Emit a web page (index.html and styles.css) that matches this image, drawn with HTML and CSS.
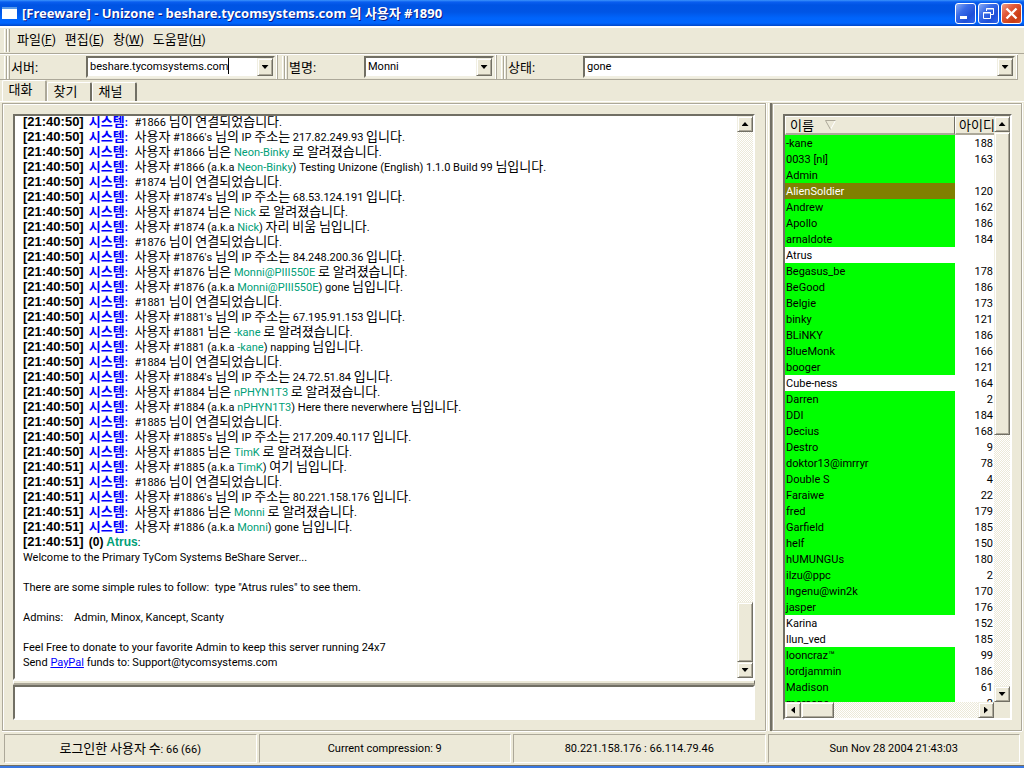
FILE: index.html
```html
<!DOCTYPE html>
<html lang="ko">
<head>
    <meta charset="UTF-8">
    <meta name="viewport" content="width=device-width, initial-scale=1.0">
    <title>[Freeware] - Unizone - beshare.tycomsystems.com 의 사용자 #1890</title>
    <link rel="stylesheet" href="styles.css">
</head>
<body>
    <div class="window">
        <header class="titlebar">
            <span class="app-icon"></span>
            <h1>[Freeware] - Unizone - beshare.tycomsystems.com 의 사용자 #1890</h1>
            <div class="window-buttons">
                <button type="button" aria-label="Minimize">
                    <svg viewBox="0 0 19 19"><path d="M4 12h7v3H4z" fill="#fff"/></svg>
                </button>
                <button type="button" aria-label="Restore">
                    <svg viewBox="0 0 19 19"><path d="M7.500 7V4.500h7v6H12M7 5h8M4.500 8.500h7v6h-7zM4 9h8" fill="none" stroke="#fff"/></svg>
                </button>
                <button type="button" class="close" aria-label="Close">
                    <svg viewBox="0 0 19 19"><path d="M4.500 4.500l10 10M14.500 4.500l-10 10" stroke="#fff" stroke-width="2.400"/></svg>
                </button>
            </div>
        </header>

        <nav class="menubar">
            <span class="grip"></span>
            <button type="button">파일<small>(<u>F</u>)</small></button>
            <button type="button">편집<small>(<u>E</u>)</small></button>
            <button type="button">창<small>(<u>W</u>)</small></button>
            <button type="button">도움말<small>(<u>H</u>)</small></button>
        </nav>

        <div class="toolbars">
            <div class="toolbar server">
                <span class="grip"></span>
                <label for="server">서버:</label>
                <div class="combo editing">
                    <input type="text" id="server" value="beshare.tycomsystems.com">
                    <button type="button" class="arrow down" aria-label="서버 목록"></button>
                </div>
            </div>
            <div class="toolbar nick">
                <span class="grip"></span>
                <label for="nick">별명:</label>
                <div class="combo">
                    <input type="text" id="nick" value="Monni">
                    <button type="button" class="arrow down" aria-label="별명 목록"></button>
                </div>
            </div>
            <div class="toolbar state">
                <span class="grip"></span>
                <label for="state">상태:</label>
                <div class="combo">
                    <input type="text" id="state" value="gone">
                    <button type="button" class="arrow down" aria-label="상태 목록"></button>
                </div>
            </div>
        </div>

        <div class="tabs" role="tablist">
            <button type="button" role="tab" aria-selected="true" class="active">대화</button>
            <button type="button" role="tab" aria-selected="false">찾기</button>
            <button type="button" role="tab" aria-selected="false">채널</button>
        </div>

        <main class="content">
            <section class="panel chat">
                <div class="sunken log-frame">
                    <div class="log">
                        <p><time>[21:40:50]</time> <b>시스템:</b> #1866 님이 연결되었습니다.</p>
                        <p><time>[21:40:50]</time> <b>시스템:</b> 사용자 #1866's 님의 IP 주소는 217.82.249.93 입니다.</p>
                        <p><time>[21:40:50]</time> <b>시스템:</b> 사용자 #1866 님은 <i>Neon-Binky</i> 로 알려졌습니다.</p>
                        <p><time>[21:40:50]</time> <b>시스템:</b> 사용자 #1866 (a.k.a <i>Neon-Binky</i>) Testing Unizone (English) 1.1.0 Build 99 님입니다.</p>
                        <p><time>[21:40:50]</time> <b>시스템:</b> #1874 님이 연결되었습니다.</p>
                        <p><time>[21:40:50]</time> <b>시스템:</b> 사용자 #1874's 님의 IP 주소는 68.53.124.191 입니다.</p>
                        <p><time>[21:40:50]</time> <b>시스템:</b> 사용자 #1874 님은 <i>Nick</i> 로 알려졌습니다.</p>
                        <p><time>[21:40:50]</time> <b>시스템:</b> 사용자 #1874 (a.k.a <i>Nick</i>) 자리 비움 님입니다.</p>
                        <p><time>[21:40:50]</time> <b>시스템:</b> #1876 님이 연결되었습니다.</p>
                        <p><time>[21:40:50]</time> <b>시스템:</b> 사용자 #1876's 님의 IP 주소는 84.248.200.36 입니다.</p>
                        <p><time>[21:40:50]</time> <b>시스템:</b> 사용자 #1876 님은 <i>Monni@PIII550E</i> 로 알려졌습니다.</p>
                        <p><time>[21:40:50]</time> <b>시스템:</b> 사용자 #1876 (a.k.a <i>Monni@PIII550E</i>) gone 님입니다.</p>
                        <p><time>[21:40:50]</time> <b>시스템:</b> #1881 님이 연결되었습니다.</p>
                        <p><time>[21:40:50]</time> <b>시스템:</b> 사용자 #1881's 님의 IP 주소는 67.195.91.153 입니다.</p>
                        <p><time>[21:40:50]</time> <b>시스템:</b> 사용자 #1881 님은 <i>-kane</i> 로 알려졌습니다.</p>
                        <p><time>[21:40:50]</time> <b>시스템:</b> 사용자 #1881 (a.k.a <i>-kane</i>) napping 님입니다.</p>
                        <p><time>[21:40:50]</time> <b>시스템:</b> #1884 님이 연결되었습니다.</p>
                        <p><time>[21:40:50]</time> <b>시스템:</b> 사용자 #1884's 님의 IP 주소는 24.72.51.84 입니다.</p>
                        <p><time>[21:40:50]</time> <b>시스템:</b> 사용자 #1884 님은 <i>nPHYN1T3</i> 로 알려졌습니다.</p>
                        <p><time>[21:40:50]</time> <b>시스템:</b> 사용자 #1884 (a.k.a <i>nPHYN1T3</i>) Here there neverwhere 님입니다.</p>
                        <p><time>[21:40:50]</time> <b>시스템:</b> #1885 님이 연결되었습니다.</p>
                        <p><time>[21:40:50]</time> <b>시스템:</b> 사용자 #1885's 님의 IP 주소는 217.209.40.117 입니다.</p>
                        <p><time>[21:40:50]</time> <b>시스템:</b> 사용자 #1885 님은 <i>TimK</i> 로 알려졌습니다.</p>
                        <p><time>[21:40:51]</time> <b>시스템:</b> 사용자 #1885 (a.k.a <i>TimK</i>) 여기 님입니다.</p>
                        <p><time>[21:40:51]</time> <b>시스템:</b> #1886 님이 연결되었습니다.</p>
                        <p><time>[21:40:51]</time> <b>시스템:</b> 사용자 #1886's 님의 IP 주소는 80.221.158.176 입니다.</p>
                        <p><time>[21:40:51]</time> <b>시스템:</b> 사용자 #1886 님은 <i>Monni</i> 로 알려졌습니다.</p>
                        <p><time>[21:40:51]</time> <b>시스템:</b> 사용자 #1886 (a.k.a <i>Monni</i>) gone 님입니다.</p>
                        <p><time>[21:40:51]</time> <strong>(0) <i>Atrus</i></strong>:</p>
                        <pre class="motd">Welcome to the Primary TyCom Systems BeShare Server...

There are some simple rules to follow:  type "Atrus rules" to see them.

Admins:    Admin, Minox, Kancept, Scanty

Feel Free to donate to your favorite Admin to keep this server running 24x7
Send <a href="#">PayPal</a> funds to: Support@tycomsystems.com</pre>
                    </div>
                    <div class="scroll vertical">
                        <button type="button" class="arrow up" aria-label="위로"></button>
                        <span class="track"></span>
                        <span class="thumb log-thumb"></span>
                        <button type="button" class="arrow down" aria-label="아래로"></button>
                    </div>
                </div>
                <div class="splitter horizontal"></div>
                <textarea class="sunken message" aria-label="메시지"></textarea>
            </section>

            <div class="splitter"></div>

            <section class="panel users">
                <div class="sunken list-frame">
                    <div class="list">
                        <table>
                            <thead>
                                <tr>
                                    <th>이름 <svg class="sort" viewBox="0 0 11 10"><path d="M10.500 0.500L5.500 9.500" stroke="#fff"/><path d="M10.500 0.500H0.500L5.500 9.500" fill="none" stroke="#aca899"/></svg></th>
                                    <th>아이디</th>
                                </tr>
                            </thead>
                            <tbody>
                                <tr><td>-kane</td><td>188</td></tr>
                                <tr><td>0033 [nl]</td><td>163</td></tr>
                                <tr><td>Admin</td><td></td></tr>
                                <tr class="selected"><td>AlienSoldier</td><td>120</td></tr>
                                <tr><td>Andrew</td><td>162</td></tr>
                                <tr><td>Apollo</td><td>186</td></tr>
                                <tr><td>arnaldote</td><td>184</td></tr>
                                <tr class="plain"><td>Atrus</td><td></td></tr>
                                <tr><td>Begasus_be</td><td>178</td></tr>
                                <tr><td>BeGood</td><td>186</td></tr>
                                <tr><td>Belgie</td><td>173</td></tr>
                                <tr><td>binky</td><td>121</td></tr>
                                <tr><td>BLiNKY</td><td>186</td></tr>
                                <tr><td>BlueMonk</td><td>166</td></tr>
                                <tr><td>booger</td><td>121</td></tr>
                                <tr class="plain"><td>Cube-ness</td><td>164</td></tr>
                                <tr><td>Darren</td><td>2</td></tr>
                                <tr><td>DDI</td><td>184</td></tr>
                                <tr><td>Decius</td><td>168</td></tr>
                                <tr><td>Destro</td><td>9</td></tr>
                                <tr><td>doktor13@imrryr</td><td>78</td></tr>
                                <tr><td>Double S</td><td>4</td></tr>
                                <tr><td>Faraiwe</td><td>22</td></tr>
                                <tr><td>fred</td><td>179</td></tr>
                                <tr><td>Garfield</td><td>185</td></tr>
                                <tr><td>helf</td><td>150</td></tr>
                                <tr><td>hUMUNGUs</td><td>180</td></tr>
                                <tr><td>ilzu@ppc</td><td>2</td></tr>
                                <tr><td>Ingenu@win2k</td><td>170</td></tr>
                                <tr><td>jasper</td><td>176</td></tr>
                                <tr class="plain"><td>Karina</td><td>152</td></tr>
                                <tr class="plain"><td>llun_ved</td><td>185</td></tr>
                                <tr><td>looncraz™</td><td>99</td></tr>
                                <tr><td>lordjammin</td><td>186</td></tr>
                                <tr><td>Madison</td><td>61</td></tr>
                                <tr><td>marcone</td><td>2</td></tr>
                            </tbody>
                        </table>
                    </div>
                    <div class="scroll vertical">
                        <button type="button" class="arrow up" aria-label="위로"></button>
                        <span class="thumb list-thumb"></span>
                        <span class="track"></span>
                        <button type="button" class="arrow down" aria-label="아래로"></button>
                    </div>
                    <div class="scroll">
                        <button type="button" class="arrow left" aria-label="왼쪽으로"></button>
                        <span class="thumb side-thumb"></span>
                        <span class="track"></span>
                        <button type="button" class="arrow right" aria-label="오른쪽으로"></button>
                    </div>
                </div>
            </section>
        </main>

        <footer class="statusbar">
            <p>로그인한 사용자 수: 66 (66)</p>
            <p>Current compression: 9</p>
            <p>80.221.158.176 : 66.114.79.46</p>
            <p>Sun Nov 28 2004 21:43:03</p>
        </footer>
    </div>

    <script src="script.js"></script>
</body>
</html>
```
FILE: script.js
```js
// Hangul is set larger than the Latin text beside it
document.querySelectorAll('.log p, .statusbar p').forEach(line => {
    line.innerHTML = line.innerHTML.replace(/[가-힣]+/g, '<span class="ko">$&</span>');
});
```
FILE: styles.css
```css
:root {
    --face: #ece9d8;
    --light: #f1efe2;
    --shadow: #aca899;
    --dark: #716f64;
    --ui: Roboto, "Noto Sans CJK KR", sans-serif;
}

* {
    margin: 0;
    padding: 0;
    box-sizing: border-box;
}

body {
    font-family: var(--ui);
    font-size: 11px;
    line-height: 15px;
    color: #000;
    background: var(--face);
}

button, input, textarea {
    font: inherit;
    color: inherit;
    border: none;
    background: none;
    outline: none;
}

.ko {
    font-size: 13px;
}

.window {
    display: flex;
    flex-direction: column;
    height: 100vh;
    border-bottom: 2px solid #3a78e0;
    overflow: hidden;
}

/* Title bar */
.titlebar {
    display: flex;
    align-items: center;
    flex: none;
    height: 26px;
    padding: 0 2px;
    background: linear-gradient(#3c94fb 0, #0a5ef0 2px, #0054e3 5px, #0055e5 12px, #0064fb 18px, #0066ff 23px, #0046c8 26px);
}

.app-icon {
    width: 15px;
    height: 12px;
    margin-right: 5px;
    background: #fff;
    border-top: 2px solid #5a9be8;
}

.titlebar h1 {
    flex: 1;
    font-family: "Noto Sans", "Noto Sans CJK KR", sans-serif;
    font-size: 13px;
    line-height: 24px;
    color: #fff;
    text-shadow: 1px 1px #0a1883;
    white-space: nowrap;
}

.window-buttons {
    display: flex;
    gap: 2px;
}

.window-buttons button {
    width: 21px;
    height: 21px;
    border: 1px solid #fff;
    border-radius: 3px;
    background: linear-gradient(135deg, #8aacf5, #3a6ce8 35%, #1f50d8 70%, #2d66ee);
}

.window-buttons .close {
    background: linear-gradient(135deg, #f0a08a, #e2593a 35%, #c93c14 75%, #d8502a);
}

.window-buttons svg {
    display: block;
    width: 19px;
    height: 19px;
}

/* Menu and toolbars */
.menubar {
    display: flex;
    align-items: center;
    flex: none;
    height: 28px;
    padding-left: 4px;
    border-top: 2px solid #fff;
    border-bottom: 1px solid var(--shadow);
}

.menubar button {
    margin-right: 9px;
    padding-bottom: 2px;
    font-size: 13px;
}

.menubar small {
    font-size: 12px;
}

.grip {
    width: 6px;
    height: 23px;
    margin-right: 7px;
    border: solid var(--shadow);
    border-width: 0 1px;
    background: linear-gradient(90deg, var(--face) 1px, var(--shadow) 1px, var(--shadow) 2px, #fff 2px, #fff 3px, var(--face) 3px);
    border-left-color: #fff;
}

.toolbars {
    display: flex;
    flex: none;
    height: 26px;
    margin-right: 6px;
    border-top: 1px solid #fff;
    border-bottom: 1px solid var(--shadow);
}

.toolbar {
    display: flex;
    align-items: center;
    padding: 0 2px 0 4px;
    border-right: 1px solid var(--shadow);
    box-shadow: inset -1px 0 #fff;
}

.toolbar .grip {
    margin-right: 1px;
}

.toolbar label {
    width: 75px;
    font-size: 13px;
}

.server {
    width: 278px;
}

.nick {
    width: 219px;
}

.state {
    flex: 1;
}

.combo {
    display: flex;
    flex: 1;
    min-width: 0;
    height: 22px;
    background: #fff;
    border: 2px solid;
    border-color: var(--dark) var(--light) var(--light) var(--dark);
    padding-left: 2px;
}

.combo input {
    flex: 1;
    min-width: 0;
    height: 16px;
}

/* the field being edited is as wide as its text, with the caret at its end */
.combo.editing input {
    flex: none;
    field-sizing: content;
    border-right: 1px solid #000;
}

.combo .arrow {
    margin-left: auto;
}

.arrow {
    display: flex;
    align-items: center;
    justify-content: center;
    flex: none;
    width: 16px;
    height: 16px;
    background: var(--face);
    border: 1px solid;
    border-color: var(--light) var(--dark) var(--dark) var(--light);
    box-shadow: inset 1px 1px #fff, inset -1px -1px var(--shadow);
}

.combo .arrow {
    height: 18px;
}

.arrow::before {
    content: "";
    width: 7px;
    height: 4px;
    background: #000;
    clip-path: polygon(0 0, 100% 0, 50% 100%);
}

.arrow.up::before {
    clip-path: polygon(0 100%, 100% 100%, 50% 0);
}

.arrow.left::before {
    width: 4px;
    height: 7px;
    clip-path: polygon(100% 0, 100% 100%, 0 50%);
}

.arrow.right::before {
    width: 4px;
    height: 7px;
    clip-path: polygon(0 0, 100% 50%, 0 100%);
}

/* Tabs */
.tabs {
    display: flex;
    align-items: flex-end;
    flex: none;
    height: 22px;
    padding-left: 2px;
    border-bottom: 1px solid #fff;
}

.tabs button {
    width: 45px;
    height: 19px;
    font-size: 13px;
    border: solid;
    border-width: 1px 2px 0 1px;
    border-color: #fff var(--dark) #fff #fff;
    border-radius: 2px 2px 0 0;
    padding: 0 7px 2px 0;
}

.tabs .active {
    height: 21px;
    padding-bottom: 3px;
    border-right-color: var(--shadow);
}

/* Panels */
.content {
    display: grid;
    grid-template-columns: minmax(0, 1fr) 6px 250px;
    flex: 1;
    min-height: 0;
    padding: 1px 2px 2px;
}

.panel {
    display: flex;
    flex-direction: column;
    min-height: 0;
    padding: 10px;
    border: 1px solid var(--shadow);
    box-shadow: inset 1px 1px #fff, 0 1px #fff, 1px 0 #fff;
}

.sunken {
    background: #fff;
    border: 2px solid;
    border-color: var(--dark) #fff #fff var(--dark);
}

.splitter {
    border: solid;
    border-width: 0 2px 0 1px;
    border-color: #fff var(--dark) #fff #fff;
    margin-left: 2px;
}

.splitter.horizontal {
    flex: none;
    height: 5px;
    margin: 0;
    border-width: 1px 1px 2px 1px;
    border-color: #fff var(--dark) var(--shadow) #fff;
}

.log-frame {
    display: flex;
    flex: 1;
    min-height: 0;
}

.log {
    display: flex;
    flex-direction: column;
    justify-content: flex-end;
    flex: 1;
    min-width: 0;
    padding: 0 8px 8px;
    overflow: hidden;
    white-space: nowrap;
}

.log p {
    flex: none;
    height: 15px;
    line-height: 13px;
}

.log time {
    display: inline-block;
    width: 63px;
    font-family: "Liberation Sans", sans-serif;
    font-size: 13px;
    font-weight: bold;
}

.log b {
    display: inline-block;
    width: 43px;
    color: #0000ff;
}

.log strong {
    font-family: "Liberation Sans", sans-serif;
    font-size: 12px;
}

.log i {
    font-style: normal;
    color: #00a078;
}

.motd {
    flex: none;
    font: inherit;
}

.motd a {
    color: #0000ff;
}

.message {
    flex: none;
    width: 100%;
    height: 35px;
    resize: none;
}

/* Scroll bars */
.scroll {
    display: flex;
}

.scroll.vertical {
    flex-direction: column;
    width: 16px;
}

.track {
    flex: 1;
    background: repeating-conic-gradient(#fff 0 25%, var(--face) 0 50%) 0 0 / 2px 2px;
}

.thumb {
    flex: none;
    background: var(--face);
    border: 1px solid;
    border-color: var(--light) var(--dark) var(--dark) var(--light);
    box-shadow: inset 1px 1px #fff, inset -1px -1px var(--shadow);
}

.log-thumb {
    height: 60px;
}

.list-thumb {
    height: 303px;
}

.side-thumb {
    width: 33px;
}

/* User list */
.users {
    padding-right: 9px;
}

.list-frame {
    display: grid;
    grid-template-columns: minmax(0, 1fr) 16px;
    grid-template-rows: minmax(0, 1fr) 16px;
    flex: 1;
    min-height: 0;
    background: linear-gradient(var(--face), var(--face)) bottom right / 16px 16px no-repeat #fff;
}

.list {
    overflow: hidden;
}

.list table {
    width: 100%;
    table-layout: fixed;
    border-collapse: separate;
    border-spacing: 0;
}

.list th {
    height: 19px;
    padding: 0 4px;
    font-size: 13px;
    font-weight: normal;
    text-align: left;
    white-space: nowrap;
    overflow: hidden;
    background: var(--face);
    border: solid;
    border-width: 1px 1px 2px;
    border-color: #fff var(--dark) var(--shadow) #fff;
}

.list th:last-child {
    width: 39px;
    padding: 0 3px;
    border-right: none;
}

.sort {
    width: 11px;
    height: 10px;
    margin-left: 8px;
}

.list td {
    height: 16px;
    padding: 1px 1px 0;
    background: #00ff00;
    overflow: hidden;
    white-space: nowrap;
}

.list .plain td {
    background: #fff;
}

.list .selected td {
    color: #fff;
    background: #808000;
}

.list td:last-child,
.list .selected td:last-child {
    color: #000;
    text-align: right;
    background: #fff;
}

/* Status bar */
.statusbar {
    display: grid;
    grid-template-columns: repeat(4, 1fr);
    gap: 2px;
    flex: none;
    height: 33px;
    padding: 1px 4px 2px;
    border-bottom: 1px solid var(--dark);
}

.statusbar p {
    padding-top: 6px;
    text-align: center;
    border: 1px solid;
    border-color: var(--shadow) #fff #fff var(--shadow);
}
```
